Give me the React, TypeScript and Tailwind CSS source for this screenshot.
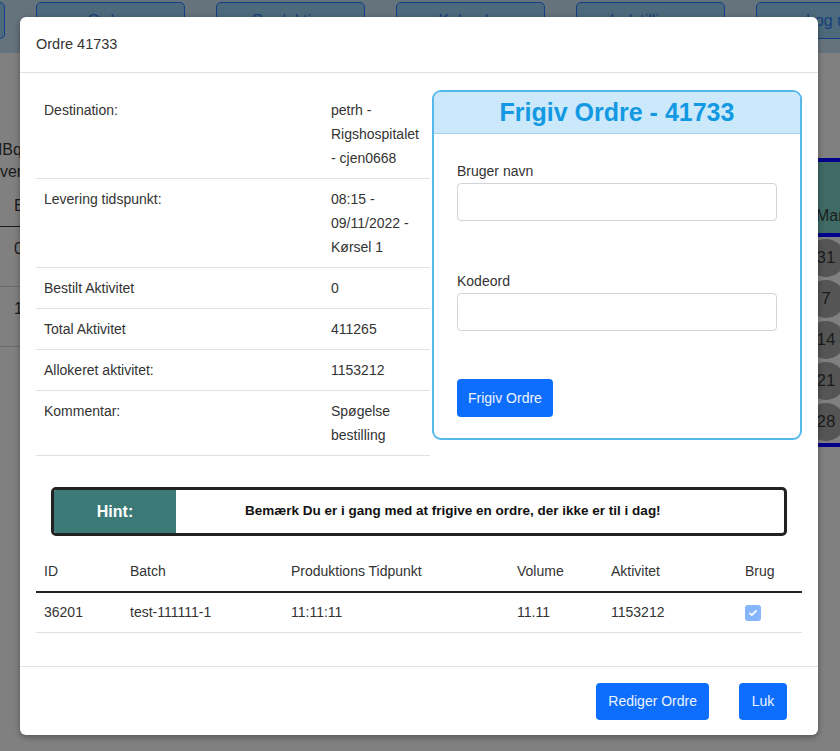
import React from "react";

const font = { fontFamily: '"Liberation Sans", Arial, sans-serif' };

const details: { label: string; value: React.ReactNode }[] = [
  {
    label: "Destination:",
    value: (
      <>
        petrh -<br />
        Rigshospitalet
        <br />- cjen0668
      </>
    ),
  },
  {
    label: "Levering tidspunkt:",
    value: (
      <>
        08:15 -<br />
        09/11/2022 -<br />
        Kørsel 1
      </>
    ),
  },
  { label: "Bestilt Aktivitet", value: "0" },
  { label: "Total Aktivitet", value: "411265" },
  { label: "Allokeret aktivitet:", value: "1153212" },
  {
    label: "Kommentar:",
    value: (
      <>
        Spøgelse
        <br />
        bestilling
      </>
    ),
  },
];

const navButtons = ["", "Ordrer", "Produktion", "Kalender", "Indstillinger", "Log ud"];
const days = ["31", "7", "14", "21", "28"];

function Background() {
  return (
    <div className="w-[840px] h-[751px] overflow-hidden bg-[#808080]">
      {/* top nav (dimmed by backdrop) */}
      <div className="h-[53px] bg-[#65737d] flex items-start pt-[2px] gap-[31px] ml-[-144px]">
        {navButtons.map((b, i) => (
          <div
            key={i}
            className="w-[149px] h-[37px] shrink-0 rounded-[5px] border border-[#133f8a] bg-[#4c6a7c] text-[#17407a] text-[16px] flex items-center justify-center"
          >
            {b}
          </div>
        ))}
      </div>

      <div className="flex justify-between">
        {/* left page text */}
        <div className="w-[60px] text-[#1b1b1b] text-[16px]">
          <div className="mt-[86px] ml-[-11px] leading-[22px]">MBq</div>
          <div className="ml-[-9px] leading-[22px]">over</div>
          <div className="mt-[11px] pl-[14px] pb-[8px] border-b border-[#1b1b1b]">B</div>
          <div className="pl-[14px] py-[10px] h-[60px] border-b border-[#6c6c6c]">0</div>
          <div className="pl-[14px] py-[10px] h-[60px] border-b border-[#6c6c6c]">1</div>
        </div>

        {/* right calendar strip */}
        <div className="w-[44px] text-[#1b1b1b] text-[16px]" style={{ marginRight: -11 }}>
          <div className="mt-[105px] h-[79px] border-y-4 border-[#00008b] bg-[#3f6a66] flex items-end pb-[5px] pl-[9px]">
            Man
          </div>
          {days.map((d) => (
            <div key={d} className="h-[41px] flex items-center">
              <div className="w-[38px] h-[38px] rounded-full bg-[#555555] flex items-center justify-center text-[17px]">
                {d}
              </div>
            </div>
          ))}
          <div className="mt-[1px] h-[4px] bg-[#00008b]" />
        </div>
      </div>
    </div>
  );
}

export default function App() {
  return (
    <div className="relative w-[840px] h-[751px] overflow-hidden" style={font}>
      <Background />

      {/* Modal */}
      <div className="absolute top-[17px] left-[20px] w-[798px] bg-white rounded-[6px] shadow-[0_2px_6px_rgba(0,0,0,0.35)] text-[#333] text-[14px]">
        <div className="h-[56px] flex items-center px-4 border-b border-[#dee2e6] text-[14.5px] text-[#333]">
          Ordre 41733
        </div>

        <div className="px-4 pt-[17px] pb-[33px]">
          <div className="flex items-start">
            <table className="w-[394px] border-collapse leading-[24px]">
              <tbody>
                {details.map((d) => (
                  <tr key={d.label} className="border-b border-[#dee2e6] align-top">
                    <td className="px-2 py-2 w-[287px]">{d.label}</td>
                    <td className="px-2 py-2">{d.value}</td>
                  </tr>
                ))}
              </tbody>
            </table>

            {/* Frigiv panel */}
            <div className="ml-[2px] w-[370px] h-[350px] border-2 border-[#55b8ec] rounded-[9px] overflow-hidden">
              <div className="h-[42px] bg-[#cbe9fa] border-b border-[#a9d3ec] flex items-center justify-center text-[25px] font-bold text-[#1399e3]">
                Frigiv Ordre - 41733
              </div>
              <div className="px-[23px] pt-[25px]">
                <div className="leading-[24px]">Bruger navn</div>
                <div className="h-[38px] border border-[#ced4da] rounded-[4px]" />
                <div className="mt-[48px] leading-[24px]">Kodeord</div>
                <div className="h-[38px] border border-[#ced4da] rounded-[4px]" />
                <button className="mt-[48px] h-[38px] px-[11px] rounded-[4px] bg-[#0d6efd] text-[#eef3ff] text-[14px]">
                  Frigiv Ordre
                </button>
              </div>
            </div>
          </div>

          {/* Hint */}
          <div className="mt-[31px] mx-[15px] h-[49px] border-[3px] border-[#222] rounded-[5px] flex overflow-hidden">
            <div className="w-[122px] bg-[#3b7a77] text-white font-bold text-[16px] flex items-center justify-center">
              Hint:
            </div>
            <div className="flex-1 flex items-center pl-[69px] font-bold text-[13.5px] text-[#111]">
              Bemærk Du er i gang med at frigive en ordre, der ikke er til i dag!
            </div>
          </div>

          {/* Batches */}
          <table className="mt-[15px] w-full border-collapse leading-[24px] text-left">
            <thead>
              <tr className="border-b-2 border-[#212529]">
                <th className="font-normal px-2 py-2 w-[86px]">ID</th>
                <th className="font-normal px-2 py-2 w-[161px]">Batch</th>
                <th className="font-normal px-2 py-2 w-[226px]">Produktions Tidpunkt</th>
                <th className="font-normal px-2 py-2 w-[94px]">Volume</th>
                <th className="font-normal px-2 py-2 w-[134px]">Aktivitet</th>
                <th className="font-normal px-2 py-2">Brug</th>
              </tr>
            </thead>
            <tbody>
              <tr className="border-b border-[#dee2e6]">
                <td className="px-2 pt-[7px] pb-2">36201</td>
                <td className="px-2 pt-[7px] pb-2">test-111111-1</td>
                <td className="px-2 pt-[7px] pb-2">11:11:11</td>
                <td className="px-2 pt-[7px] pb-2">11.11</td>
                <td className="px-2 pt-[7px] pb-2">1153212</td>
                <td className="px-2 pt-[7px] pb-2">
                  <span className="inline-flex w-4 h-4 rounded-[3px] bg-[#86b7fe] items-center justify-center align-middle">
                    <svg width="10" height="10" viewBox="0 0 16 16" fill="none">
                      <path d="M3 8.5l3 3 7-7" stroke="white" strokeWidth="2.6" strokeLinecap="round" strokeLinejoin="round" />
                    </svg>
                  </span>
                </td>
              </tr>
            </tbody>
          </table>
        </div>

        <div className="border-t border-[#dee2e6] h-[69px] flex items-center justify-end gap-[30px] pr-[31px]">
          <button className="h-[37px] px-3 rounded-[4px] bg-[#0d6efd] text-[#eef3ff] text-[14px]">Rediger Ordre</button>
          <button className="h-[37px] w-[48px] rounded-[4px] bg-[#0d6efd] text-[#eef3ff] text-[14px]">Luk</button>
        </div>
      </div>
    </div>
  );
}
